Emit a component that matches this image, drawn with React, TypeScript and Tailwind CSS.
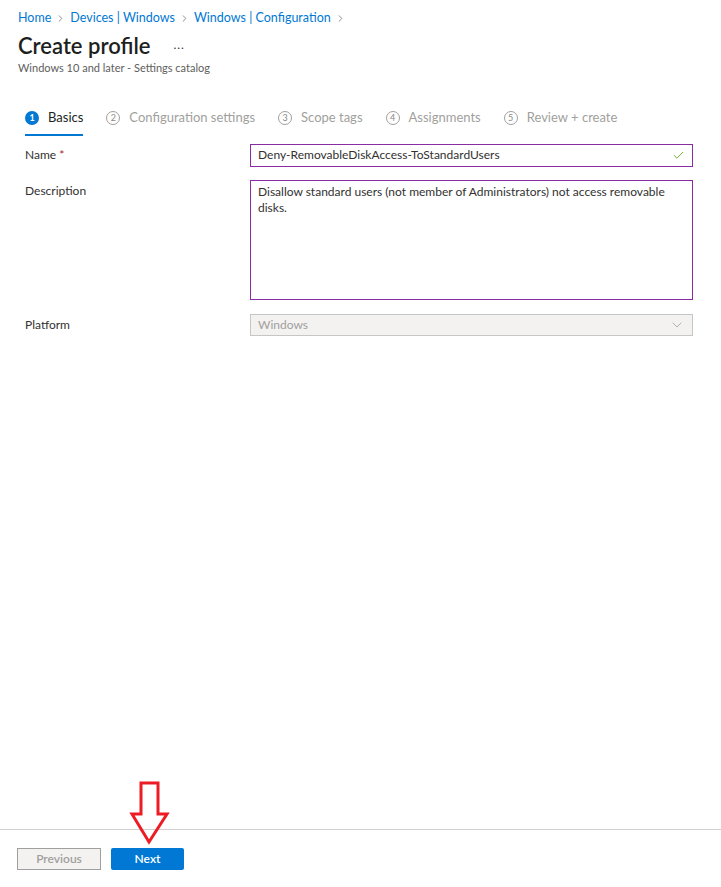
import { Check, ChevronDown, ChevronRight } from "lucide-react";

const crumbs = ["Home", "Devices | Windows", "Windows | Configuration"];

const steps = [
  { n: 1, label: "Basics", active: true },
  { n: 2, label: "Configuration settings" },
  { n: 3, label: "Scope tags" },
  { n: 4, label: "Assignments" },
  { n: 5, label: "Review + create" },
];

function StepBadge({ n, active }: { n: number; active?: boolean }) {
  if (active) {
    return (
      <span className="flex h-[14px] w-[14px] items-center justify-center rounded-full bg-[#0078d4] text-[9px] font-bold text-white">
        {n}
      </span>
    );
  }
  return (
    <span className="flex h-[14px] w-[14px] items-center justify-center rounded-full border border-[#a19f9d] text-[9px] text-[#8a8886]">
      {n}
    </span>
  );
}

export default function App() {
  return (
    <div
      className="relative flex h-[887px] w-full flex-col bg-white text-[12px] text-[#323130]"
      style={{ fontFamily: '"Segoe UI", Lato, "Liberation Sans", sans-serif' }}
    >
      <div className="flex-1 pl-[18px] pr-[28px]">
        {/* breadcrumb */}
        <div className="flex items-center pt-[9px] text-[12.5px] text-[#0078d4]">
          {crumbs.map((c) => (
            <span key={c} className="flex items-center">
              <span>{c}</span>
              <ChevronRight className="mx-[4px] h-[11px] w-[11px] text-[#605e5c]" strokeWidth={1.5} />
            </span>
          ))}
        </div>

        {/* title */}
        <div className="mt-[4px] flex items-center">
          <h1 className="text-[22px] font-semibold leading-[27px] text-[#201f1e]">Create profile</h1>
          <span className="ml-[23px] text-[12px] tracking-[1px] text-[#323130]">...</span>
        </div>
        <div className="mt-[1px] text-[11px] text-[#605e5c]">Windows 10 and later - Settings catalog</div>

        {/* steps */}
        <div className="mt-[30px] flex items-center gap-[23px] pl-[7px] text-[13px]">
          {steps.map((s) => (
            <div
              key={s.n}
              className={`flex items-center gap-[9px] pb-[6px] pt-[2px] border-b-2 ${
                s.active ? "border-[#0078d4]" : "border-transparent"
              }`}
            >
              <StepBadge n={s.n} active={s.active} />
              <span className={s.active ? "text-[#201f1e]" : "text-[#a19f9d]"}>{s.label}</span>
            </div>
          ))}
        </div>

        {/* form */}
        <div className="mt-[8px] flex flex-col pl-[7px]">
          <div className="flex items-center">
            <div className="w-[225px]">
              Name <span className="text-[#a4262c]">*</span>
            </div>
            <div className="flex h-[23px] flex-1 items-center justify-between border border-[#8a2da5] px-[7px]">
              <span>Deny-RemovableDiskAccess-ToStandardUsers</span>
              <Check className="h-[13px] w-[13px] text-[#57a300]" strokeWidth={1.5} />
            </div>
          </div>

          <div className="mt-[13px] flex items-start">
            <div className="w-[225px] pt-[2px]">Description</div>
            <div className="h-[120px] flex-1 border border-[#8a2da5] px-[7px] pt-[3px] leading-[16px]">
              Disallow standard users (not member of Administrators) not access removable disks.
            </div>
          </div>

          <div className="mt-[14px] flex items-center">
            <div className="w-[225px]">Platform</div>
            <div className="flex h-[22px] flex-1 items-center justify-between border border-[#c8c6c4] bg-[#f3f2f1] px-[7px] text-[#a19f9d]">
              <span>Windows</span>
              <ChevronDown className="h-[16px] w-[16px] text-[#a19f9d]" strokeWidth={1.2} />
            </div>
          </div>
        </div>
      </div>

      {/* footer */}
      <div className="h-[58px] border-t border-[#d2d0ce]">
        <div className="ml-[17px] mt-[18px] flex gap-[10px]">
          <button className="h-[22px] w-[84px] border border-[#a19f9d] bg-[#f3f2f1] text-[12px] font-semibold text-[#a19f9d]">
            Previous
          </button>
          <button className="h-[22px] w-[73px] rounded-[2px] bg-[#0078d4] text-[12px] font-semibold text-white">
            Next
          </button>
        </div>
      </div>

      {/* annotation arrow */}
      <svg className="absolute left-[129px] top-[781px]" width="41" height="64" viewBox="0 0 41 64">
        <path
          d="M12 2 H29 V33 H38 L20 61 L3 33 H12 Z"
          fill="none"
          stroke="#ed1c24"
          strokeWidth="3"
          strokeLinejoin="miter"
        />
      </svg>
    </div>
  );
}
